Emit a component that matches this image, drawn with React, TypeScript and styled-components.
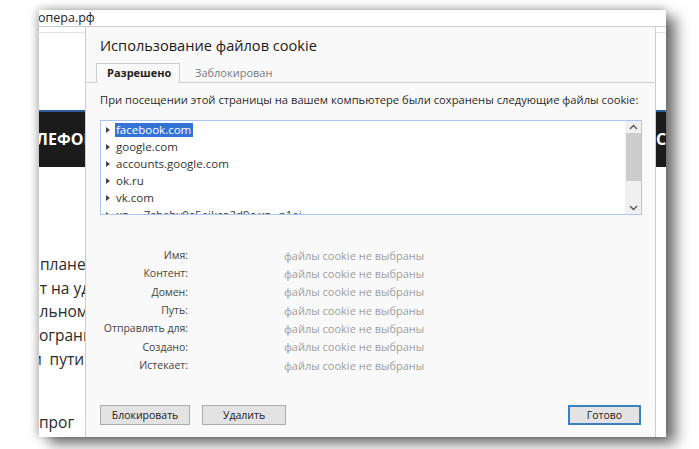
import React from 'react';
import styled, { createGlobalStyle } from 'styled-components';

const GlobalStyle = createGlobalStyle`
  html, body {
    margin: 0;
    background: #fff;
  }
  body {
    font-family: "Open Sans", "Noto Sans", sans-serif;
    color: #333;
  }
`;

const Stage = styled.div`
  width: 699px;
  height: 449px;
  padding: 10px 0 0 39px;
  box-sizing: border-box;
  overflow: hidden;
`;

const Shot = styled.div`
  width: 627px;
  height: 427px;
  display: flex;
  flex-direction: column;
  background: #fff;
  box-shadow: 10px 7px 13px rgba(0, 0, 0, 0.55), -3px 0 8px rgba(0, 0, 0, 0.18), 0 -3px 8px rgba(0, 0, 0, 0.12);
`;

const AddressBar = styled.div`
  height: 16px;
  border-bottom: 1px solid #cfcfcf;
  font-size: 12.5px;
  line-height: 15px;
  color: #222;
  white-space: nowrap;
  overflow: hidden;
  text-indent: -1px;
`;

const Body = styled.div`
  flex: 1;
  min-height: 0;
  display: flex;
`;

const PageStrip = styled.div<{ w: number }>`
  width: ${(p) => p.w}px;
  flex: none;
  display: flex;
  flex-direction: column;
  overflow: hidden;
  white-space: nowrap;
`;

const PageTop = styled.div`
  height: 5px;
  border-bottom: 1px solid #e2e2e2;
`;

const DarkBar = styled.div<{ indent: number }>`
  margin-top: 77px;
  height: 55px;
  background: #1b1b1b;
  border-top: 2px solid #2d5d9a;
  color: #fff;
  font-weight: 700;
  font-size: 16px;
  line-height: 55px;
  text-indent: ${(p) => p.indent}px;
`;

const PageText = styled.div`
  margin-top: 86px;
  display: flex;
  flex-direction: column;
`;

const PageLine = styled.div<{ indent: number; gap?: number }>`
  font-size: 15.5px;
  line-height: 23.7px;
  color: #2b2b2b;
  text-indent: ${(p) => p.indent}px;
  margin-top: ${(p) => p.gap || 0}px;
`;

const Dialog = styled.div`
  width: 571px;
  flex: none;
  box-sizing: border-box;
  background: #f9f9f9;
  border-left: 1px solid #cdcdcd;
  border-right: 1px solid #cdcdcd;
  display: flex;
  flex-direction: column;
`;

const Title = styled.div`
  padding: 8px 0 0 14px;
  font-size: 14.6px;
  line-height: 20px;
  color: #1a1a1a;
`;

const TabBar = styled.div`
  margin-top: 8px;
  padding-left: 10px;
  display: flex;
  align-items: flex-end;
  border-bottom: 1px solid #cfcfcf;
  height: 19px;
`;

const Tab = styled.div<{ active?: boolean }>`
  height: ${(p) => (p.active ? 20 : 19)}px;
  margin-bottom: ${(p) => (p.active ? -1 : 0)}px;
  box-sizing: border-box;
  padding: 0 ${(p) => (p.active ? 10 : 14)}px;
  font-size: 11px;
  line-height: 18px;
  font-weight: ${(p) => (p.active ? 700 : 400)};
  color: ${(p) => (p.active ? '#222' : '#7a7a7a')};
  background: #f9f9f9;
  border: 1px solid ${(p) => (p.active ? '#cfcfcf' : 'transparent')};
  border-bottom: none;
  width: ${(p) => (p.active ? '84px' : 'auto')};
`;

const Lead = styled.div`
  margin-top: 9px;
  padding-left: 14px;
  font-size: 11.2px;
  line-height: 16px;
  color: #2a2a2a;
  white-space: nowrap;
`;

const ListBox = styled.div`
  margin: 12px 13px 0 14px;
  height: 95px;
  box-sizing: border-box;
  border: 1px solid #a9c6ef;
  background: #fff;
  display: flex;
  overflow: hidden;
`;

const Rows = styled.div`
  flex: 1;
  overflow: hidden;
`;

const Row = styled.div`
  height: 17px;
  display: flex;
  align-items: center;
  padding-left: 5px;
  font-size: 11.5px;
  color: #333;
  white-space: nowrap;
`;

const Arrow = styled.span`
  width: 0;
  height: 0;
  border-left: 4px solid #444;
  border-top: 3px solid transparent;
  border-bottom: 3px solid transparent;
  margin-right: 5px;
`;

const Host = styled.span<{ selected?: boolean }>`
  padding: 0 2px 0 1px;
  line-height: 14px;
  background: ${(p) => (p.selected ? '#3473d6' : 'transparent')};
  color: ${(p) => (p.selected ? '#fff' : '#333')};
`;

const Scroll = styled.div`
  width: 16px;
  background: #f0f0f0;
  display: flex;
  flex-direction: column;
  align-items: center;
`;

const ScrollBtn = styled.div`
  height: 12px;
  display: flex;
  align-items: center;
  justify-content: center;
`;

const Thumb = styled.div`
  width: 15px;
  height: 48px;
  background: #cdcdcd;
`;

const ScrollTrack = styled.div`
  flex: 1;
`;

const Details = styled.div`
  margin-top: 31px;
  display: grid;
  grid-template-columns: 102px 1fr;
  column-gap: 96px;
  grid-auto-rows: 18.33px;
  align-items: center;
`;

const Label = styled.div`
  text-align: right;
  font-size: 10.5px;
  color: #444;
  white-space: nowrap;
`;

const Value = styled.div`
  font-size: 11px;
  color: #9e9e9e;
`;

const Footer = styled.div`
  margin-top: auto;
  padding: 0 14px 12px;
  display: flex;
  gap: 12px;
`;

const Button = styled.button<{ w: number; primary?: boolean }>`
  width: ${(p) => p.w}px;
  height: 20px;
  box-sizing: border-box;
  margin: 0;
  padding: 0;
  font-family: inherit;
  font-size: 10.5px;
  color: #222;
  background: #e3e3e3;
  border: ${(p) => (p.primary ? '2px solid #3a80c4' : '1px solid #acacac')};
  margin-left: ${(p) => (p.primary ? 'auto' : '0')};
`;

const Chevron = ({ up }: { up?: boolean }) => (
  <svg width="9" height="6" viewBox="0 0 9 6">
    <path d={up ? 'M1 5 L4.5 1.5 L8 5' : 'M1 1 L4.5 4.5 L8 1'} fill="none" stroke="#555" strokeWidth="1.4" />
  </svg>
);

const hosts = ['facebook.com', 'google.com', 'accounts.google.com', 'ok.ru', 'vk.com', 'xn----7sbabv0a5aikco2d9c.xn--p1ai'];

const fields = ['Имя:', 'Контент:', 'Домен:', 'Путь:', 'Отправлять для:', 'Создано:', 'Истекает:'];

const pageLines = [
  { text: 'планет', indent: 1 },
  { text: 'ет на удалён', indent: -8 },
  { text: 'альном', indent: -8 },
  { text: 'огранич', indent: 0 },
  { text: 'и\u2002пути', indent: -7 },
  { text: 'прог', indent: 0, gap: 39 },
];

export default function App() {
  return (
    <>
      <GlobalStyle />
      <Stage>
        <Shot>
          <AddressBar>опера.рф</AddressBar>
          <Body>
            <PageStrip w={46}>
              <PageTop />
              <DarkBar indent={-3}>ЛЕФОН</DarkBar>
              <PageText>
                {pageLines.map((l, i) => (
                  <PageLine key={i} indent={l.indent} gap={l.gap}>
                    {l.text}
                  </PageLine>
                ))}
              </PageText>
            </PageStrip>
            <Dialog>
              <Title>Использование файлов cookie</Title>
              <TabBar>
                <Tab active>Разрешено</Tab>
                <Tab>Заблокирован</Tab>
              </TabBar>
              <Lead>При посещении этой страницы на вашем компьютере были сохранены следующие файлы cookie:</Lead>
              <ListBox>
                <Rows>
                  {hosts.map((h, i) => (
                    <Row key={h}>
                      <Arrow />
                      <Host selected={i === 0}>{h}</Host>
                    </Row>
                  ))}
                </Rows>
                <Scroll>
                  <ScrollBtn>
                    <Chevron up />
                  </ScrollBtn>
                  <Thumb />
                  <ScrollTrack />
                  <ScrollBtn>
                    <Chevron />
                  </ScrollBtn>
                </Scroll>
              </ListBox>
              <Details>
                {fields.map((f) => (
                  <React.Fragment key={f}>
                    <Label>{f}</Label>
                    <Value>файлы cookie не выбраны</Value>
                  </React.Fragment>
                ))}
              </Details>
              <Footer>
                <Button w={90}>Блокировать</Button>
                <Button w={84}>Удалить</Button>
                <Button w={73} primary>
                  Готово
                </Button>
              </Footer>
            </Dialog>
            <PageStrip w={10}>
              <PageTop />
              <DarkBar indent={0}>СЕ</DarkBar>
            </PageStrip>
          </Body>
        </Shot>
      </Stage>
    </>
  );
}
